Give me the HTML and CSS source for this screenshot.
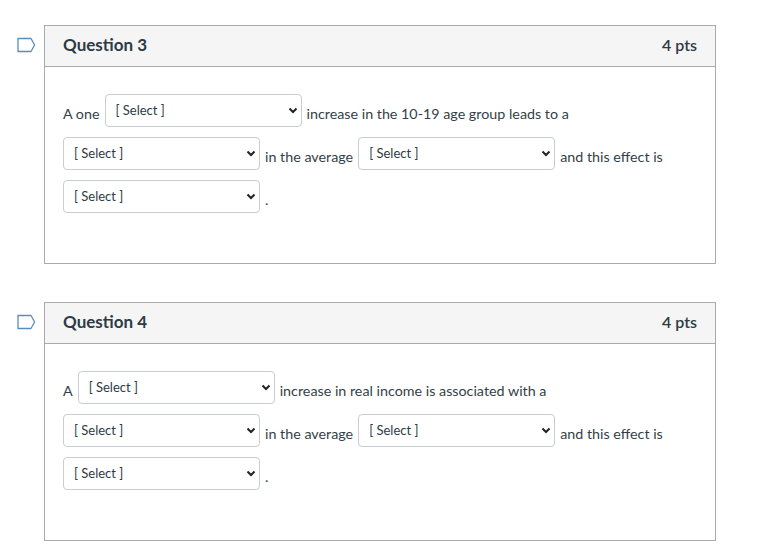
FILE: index.html
```html
<!DOCTYPE html>
<html>
<head>
<meta charset="utf-8">
<link rel="stylesheet" href="styles.css">
</head>
<body>
<div class="quiz">
  <div class="qrow">
    <div class="flagcol">
      <svg class="flag" width="19" height="16" viewBox="0 0 19 16"><path d="M1 1.5 H14 L17.6 8 L14 14.5 H1 Z" fill="none" stroke="#5a8cbf" stroke-width="1.3" stroke-linejoin="round"/></svg>
    </div>
    <div class="question">
      <div class="qhead"><span class="qname">Question 3</span><span class="qpts">4 pts</span></div>
      <div class="qbody">
        <div class="line"><span class="txt">A one</span><span class="sel"><select><option>[ Select ]</option></select><svg class="chev" width="10" height="7" viewBox="0 0 10 7"><path d="M1.5 1.5 L5 5 L8.5 1.5" fill="none" stroke="#222" stroke-width="2"/></svg></span><span class="txt">increase in the 10-19 age group leads to a</span></div>
        <div class="line"><span class="sel"><select><option>[ Select ]</option></select><svg class="chev" width="10" height="7" viewBox="0 0 10 7"><path d="M1.5 1.5 L5 5 L8.5 1.5" fill="none" stroke="#222" stroke-width="2"/></svg></span><span class="txt">in the average</span><span class="sel"><select><option>[ Select ]</option></select><svg class="chev" width="10" height="7" viewBox="0 0 10 7"><path d="M1.5 1.5 L5 5 L8.5 1.5" fill="none" stroke="#222" stroke-width="2"/></svg></span><span class="txt">and this effect is</span></div>
        <div class="line"><span class="sel"><select><option>[ Select ]</option></select><svg class="chev" width="10" height="7" viewBox="0 0 10 7"><path d="M1.5 1.5 L5 5 L8.5 1.5" fill="none" stroke="#222" stroke-width="2"/></svg></span><span class="txt">.</span></div>
      </div>
    </div>
  </div>
  <div class="qrow">
    <div class="flagcol">
      <svg class="flag" width="19" height="16" viewBox="0 0 19 16"><path d="M1 1.5 H14 L17.6 8 L14 14.5 H1 Z" fill="none" stroke="#5a8cbf" stroke-width="1.3" stroke-linejoin="round"/></svg>
    </div>
    <div class="question">
      <div class="qhead"><span class="qname">Question 4</span><span class="qpts">4 pts</span></div>
      <div class="qbody">
        <div class="line"><span class="txt">A</span><span class="sel"><select><option>[ Select ]</option></select><svg class="chev" width="10" height="7" viewBox="0 0 10 7"><path d="M1.5 1.5 L5 5 L8.5 1.5" fill="none" stroke="#222" stroke-width="2"/></svg></span><span class="txt">increase in real income is associated with a</span></div>
        <div class="line"><span class="sel"><select><option>[ Select ]</option></select><svg class="chev" width="10" height="7" viewBox="0 0 10 7"><path d="M1.5 1.5 L5 5 L8.5 1.5" fill="none" stroke="#222" stroke-width="2"/></svg></span><span class="txt">in the average</span><span class="sel"><select><option>[ Select ]</option></select><svg class="chev" width="10" height="7" viewBox="0 0 10 7"><path d="M1.5 1.5 L5 5 L8.5 1.5" fill="none" stroke="#222" stroke-width="2"/></svg></span><span class="txt">and this effect is</span></div>
        <div class="line"><span class="sel"><select><option>[ Select ]</option></select><svg class="chev" width="10" height="7" viewBox="0 0 10 7"><path d="M1.5 1.5 L5 5 L8.5 1.5" fill="none" stroke="#222" stroke-width="2"/></svg></span><span class="txt">.</span></div>
      </div>
    </div>
  </div>
</div>
</body>
</html>
```
FILE: styles.css
```css
html, body {
  margin: 0;
  padding: 0;
  background: #fff;
}
body {
  font-family: Lato, "Open Sans", sans-serif;
  color: #2d3b45;
}
.quiz {
  padding-top: 25px;
  display: flex;
  flex-direction: column;
  gap: 38px;
}
.qrow {
  display: flex;
  align-items: flex-start;
}
.flagcol {
  width: 44px;
  padding-top: 12px;
  padding-left: 17px;
  box-sizing: border-box;
}
.flag {
  display: block;
}
.question {
  width: 672px;
  box-sizing: border-box;
  border: 1px solid #aaaaaa;
}
.qhead {
  height: 41px;
  box-sizing: border-box;
  background: #f5f5f5;
  border-bottom: 1px solid #aaaaaa;
  display: flex;
  align-items: center;
  justify-content: space-between;
  padding: 0 18px 3px 18px;
}
.qname {
  font-size: 17px;
  font-weight: 700;
  color: #2d3b45;
}
.qpts {
  font-size: 16px;
  font-weight: 600;
  color: #2d3b45;
}
.qbody {
  padding: 27px 18px 50px 18px;
  display: flex;
  flex-direction: column;
  gap: 10px;
}
.line {
  display: flex;
  align-items: center;
  gap: 5px;
  height: 33px;
}
.txt {
  font-size: 14.3px;
  margin-top: 5px;
  white-space: nowrap;
  color: #333f48;
}
.sel {
  position: relative;
  display: block;
  width: 197px;
  height: 33px;
}
.sel select {
  appearance: none;
  -webkit-appearance: none;
  width: 197px;
  height: 33px;
  box-sizing: border-box;
  border: 1px solid #c7cdd1;
  border-radius: 4px;
  background: #fff;
  font-family: Lato, "Open Sans", sans-serif;
  font-size: 13px;
  color: #2d3b45;
  padding: 0 10px 2px 10px;
  margin: 0;
}
.chev {
  position: absolute;
  right: 4px;
  top: 13px;
}
```
